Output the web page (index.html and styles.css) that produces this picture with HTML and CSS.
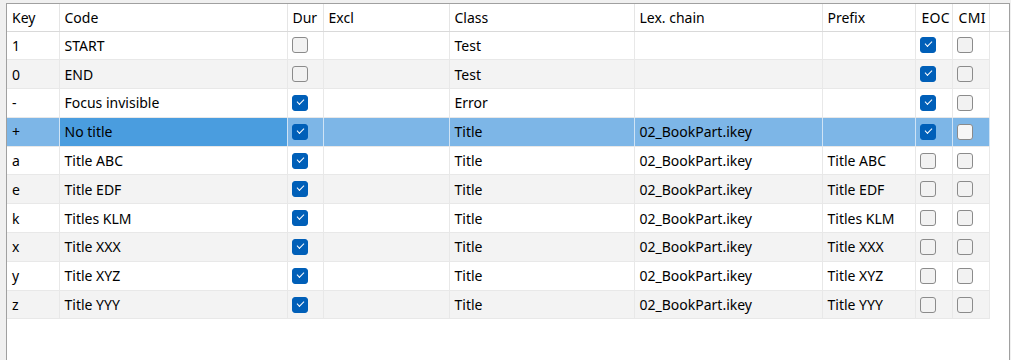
FILE: index.html
```html
<!DOCTYPE html>
<html>
<head>
<meta charset="utf-8">
<link rel="stylesheet" href="styles.css">
</head>
<body>
<div class="frame">
<table class="grid">
<colgroup>
<col class="c-key"><col class="c-code"><col class="c-dur"><col class="c-excl"><col class="c-class"><col class="c-lex"><col class="c-prefix"><col class="c-eoc"><col class="c-cmi"><col class="c-fill">
</colgroup>
<thead>
<tr><th>Key</th><th>Code</th><th>Dur</th><th>Excl</th><th>Class</th><th>Lex. chain</th><th>Prefix</th><th class="clip">EOC</th><th class="clip">CMI</th><th class="fill"></th></tr>
</thead>
<tbody>
<tr><td>1</td><td>START</td><td><span class="cb"></span></td><td></td><td>Test</td><td></td><td></td><td><span class="cb on"></span></td><td><span class="cb"></span></td><td class="fill"></td></tr>
<tr class="alt"><td>0</td><td>END</td><td><span class="cb"></span></td><td></td><td>Test</td><td></td><td></td><td><span class="cb on"></span></td><td><span class="cb"></span></td><td class="fill"></td></tr>
<tr><td>-</td><td>Focus invisible</td><td><span class="cb on"></span></td><td></td><td>Error</td><td></td><td></td><td><span class="cb on"></span></td><td><span class="cb"></span></td><td class="fill"></td></tr>
<tr class="sel"><td>+</td><td class="cur">No title</td><td><span class="cb on"></span></td><td></td><td>Title</td><td>02_BookPart.ikey</td><td></td><td><span class="cb on"></span></td><td><span class="cb light"></span></td><td class="fill"></td></tr>
<tr><td>a</td><td>Title ABC</td><td><span class="cb on"></span></td><td></td><td>Title</td><td>02_BookPart.ikey</td><td>Title ABC</td><td><span class="cb"></span></td><td><span class="cb"></span></td><td class="fill"></td></tr>
<tr class="alt"><td>e</td><td>Title EDF</td><td><span class="cb on"></span></td><td></td><td>Title</td><td>02_BookPart.ikey</td><td>Title EDF</td><td><span class="cb"></span></td><td><span class="cb"></span></td><td class="fill"></td></tr>
<tr><td>k</td><td>Titles KLM</td><td><span class="cb on"></span></td><td></td><td>Title</td><td>02_BookPart.ikey</td><td>Titles KLM</td><td><span class="cb"></span></td><td><span class="cb"></span></td><td class="fill"></td></tr>
<tr class="alt"><td>x</td><td>Title XXX</td><td><span class="cb on"></span></td><td></td><td>Title</td><td>02_BookPart.ikey</td><td>Title XXX</td><td><span class="cb"></span></td><td><span class="cb"></span></td><td class="fill"></td></tr>
<tr><td>y</td><td>Title XYZ</td><td><span class="cb on"></span></td><td></td><td>Title</td><td>02_BookPart.ikey</td><td>Title XYZ</td><td><span class="cb"></span></td><td><span class="cb"></span></td><td class="fill"></td></tr>
<tr class="alt"><td>z</td><td>Title YYY</td><td><span class="cb on"></span></td><td></td><td>Title</td><td>02_BookPart.ikey</td><td>Title YYY</td><td><span class="cb"></span></td><td><span class="cb"></span></td><td class="fill"></td></tr>
</tbody>
</table>
</div>
</body>
</html>
```
FILE: styles.css
```css
html, body {
  margin: 0;
  padding: 0;
  height: 100%;
  background: #f0f0f0;
  overflow: hidden;
}
body {
  font-family: "Noto Sans", "Open Sans", sans-serif;
  font-size: 14px;
  color: #000000;
}
.frame {
  margin: 3px 1px 0 6px;
  height: calc(100% - 4px);
  background: #ffffff;
  border: 1px solid #a0a0a0;
  border-bottom: none;
}
.grid {
  border-collapse: collapse;
  table-layout: fixed;
  width: 1002px;
}
.c-key { width: 52px; }
.c-code { width: 228px; }
.c-dur { width: 36px; }
.c-excl { width: 126px; }
.c-class { width: 185px; }
.c-lex { width: 188px; }
.c-prefix { width: 93px; }
.c-eoc { width: 37px; }
.c-cmi { width: 37px; }
.c-fill { width: 20px; }
.grid th {
  height: 27px;
  padding: 0 0 0 5px;
  text-align: left;
  font-weight: normal;
  white-space: nowrap;
  overflow: hidden;
  border-right: 1px solid #e5e5e5;
  border-bottom: 1px solid #d9d9d9;
  box-sizing: border-box;
}
.grid th.clip { text-overflow: clip; padding-left: 6px; letter-spacing: 0.3px; }
.grid td {
  height: 28.8px;
  padding: 0 0 0 5px;
  white-space: nowrap;
  overflow: hidden;
  border-right: 1px solid #e8e8e8;
  border-bottom: 1px solid #e8e8e8;
  box-sizing: border-box;
  vertical-align: middle;
}
.grid td.fill {
  border: none;
  background: #ffffff;
}
.grid th.fill { border-right: none; }
.grid tr.alt td { background: #f3f3f3; }
.grid tr.alt td.fill { background: #ffffff; }
.grid tr.sel td { background: #7db6e7; border-right-color: #cfe3f5; }
.grid tr.sel td.cur { background: #4a9ddf; }
.grid tr.sel td.fill { background: #ffffff; }
.grid td:nth-child(3), .grid td:nth-child(8), .grid td:nth-child(9) {
  padding-left: 4px;
}
.cb {
  display: block;
  width: 16px;
  height: 16px;
  box-sizing: border-box;
  border: 1px solid #8b8b8b;
  border-radius: 3px;
  background: #f2f2f2;
  position: relative;
}
.cb.light { background: #f6f6f6; border-color: #8a8a8a; }
.cb.on {
  background: #005fb8;
  border-color: #005fb8;
}
.cb.on::after {
  content: "";
  position: absolute;
  left: 4px;
  top: 3px;
  width: 6px;
  height: 3px;
  border-left: 1.4px solid #ffffff;
  border-bottom: 1.4px solid #ffffff;
  transform: rotate(-45deg);
  transform-origin: center;
}
```
